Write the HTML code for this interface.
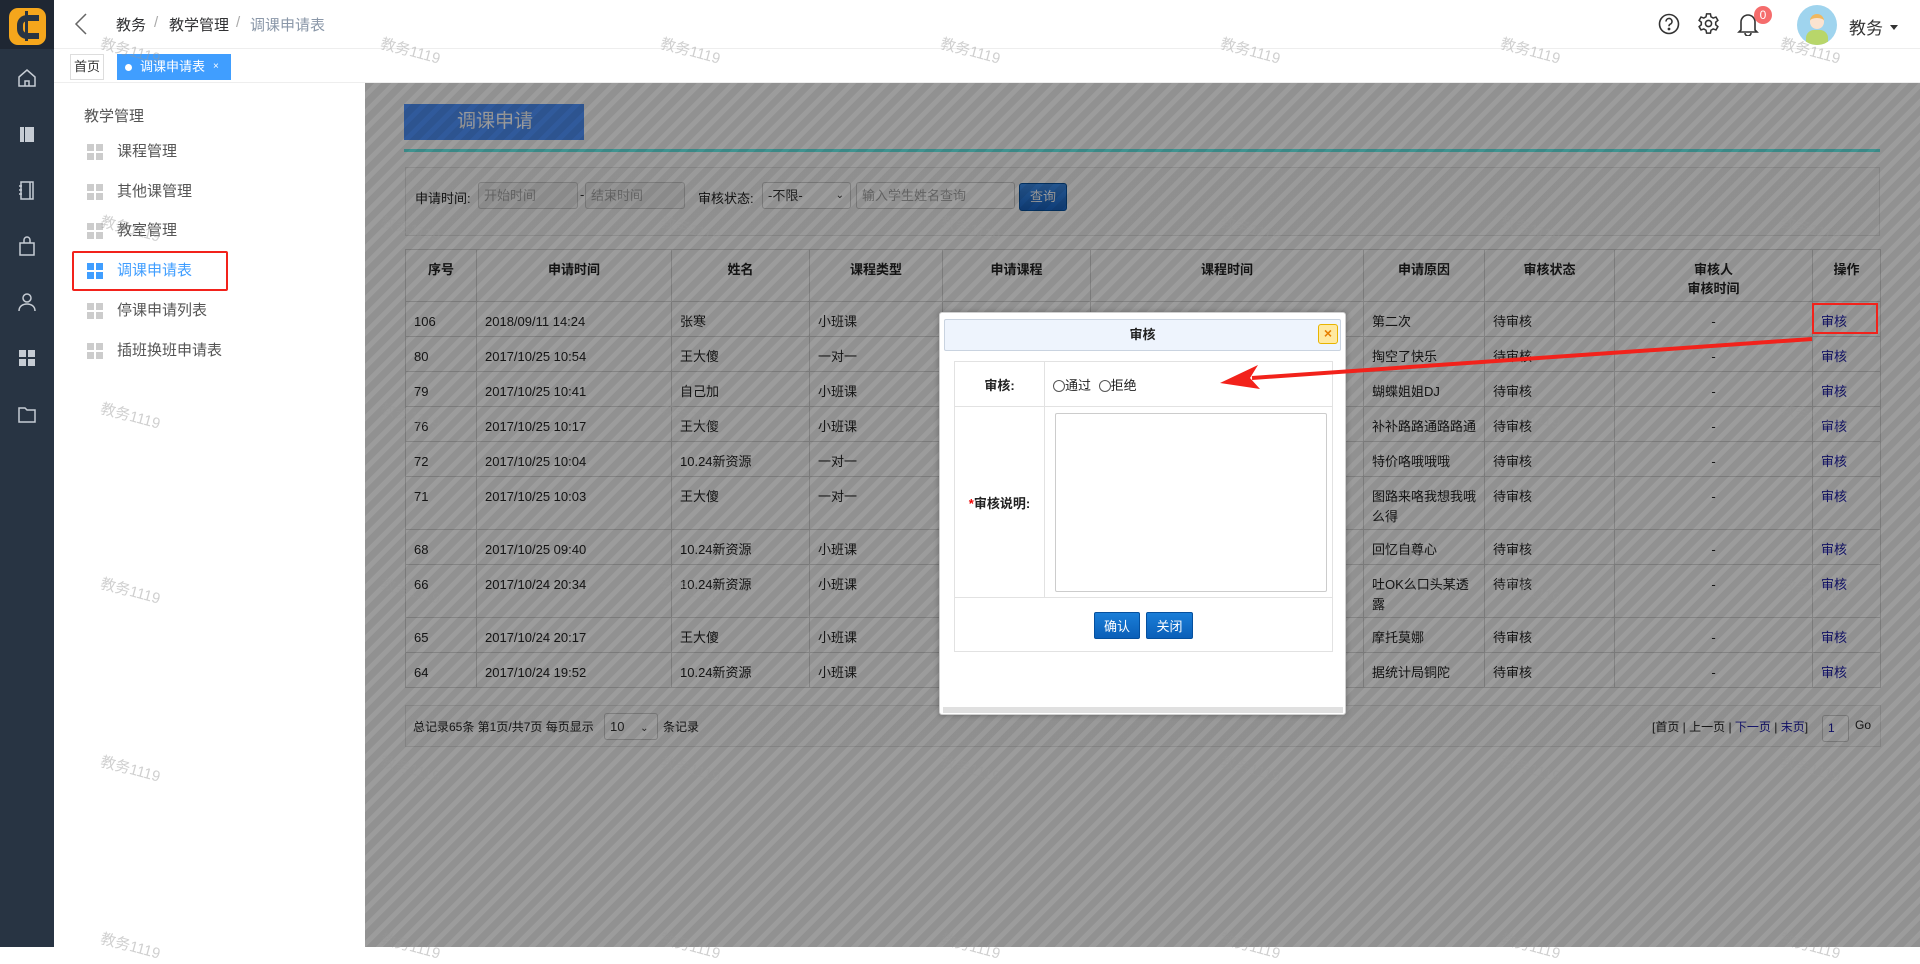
<!DOCTYPE html>
<html><head><meta charset="utf-8">
<style>
*{margin:0;padding:0;box-sizing:border-box}
body{width:1920px;height:947px;overflow:hidden;position:relative;background:#fff;font-family:"Liberation Sans","Noto Sans CJK SC",sans-serif;color:#333}
.abs{position:absolute}
#side{left:0;top:0;width:54px;height:947px;background:#283443}
#logo{left:0;top:0;width:54px;height:49px;background:#1f2733}
.si{position:absolute;left:16px;width:22px;height:22px}
#top{left:54px;top:0;right:0;height:49px;border-bottom:1px solid #eee;background:#fff}
.bc{position:absolute;top:14px;font-size:15px;color:#303133}
#tabs{left:54px;top:49px;right:0;height:34px;border-bottom:1px solid #eee}
#menu{left:54px;top:83px;width:311px;height:864px;background:#fff}
.mi{position:absolute;left:33px;font-size:15px;color:#555;height:20px;line-height:20px}
.mi i{position:absolute;left:0;top:2px;width:16px;height:16px;background:
linear-gradient(#ccc,#ccc) 0 0/7px 7px no-repeat,linear-gradient(#ccc,#ccc) 9px 0/7px 7px no-repeat,linear-gradient(#ccc,#ccc) 0 9px/7px 7px no-repeat,linear-gradient(#ccc,#ccc) 9px 9px/7px 7px no-repeat}
.mi span{position:absolute;left:30px;white-space:nowrap}
#content{left:365px;top:83px;width:1555px;height:864px;background:#fff}
#ov{left:365px;top:83px;width:1555px;height:864px;background:repeating-linear-gradient(-45deg,rgba(0,0,0,0.43) 0 7px,rgba(0,0,0,0.39) 7px 12px)}
table{border-collapse:collapse;font-size:13px;color:#222}
td,th{border:1px solid #d6d6d6}
#tbl th{font-weight:bold;vertical-align:top;padding-top:9px;height:52px}
#tbl td{padding:0 8px;vertical-align:top;padding-top:10px;line-height:20px}
.wm{position:absolute;font-size:15px;color:rgba(150,150,150,0.45);transform:rotate(15deg);white-space:nowrap;font-family:"Liberation Sans","Noto Sans CJK SC",sans-serif}
.inp{position:absolute;height:27px;border:1px solid #ccc;border-radius:3px;background:#f2f2f2;font-size:13px;color:#aaa;line-height:25px;padding-left:5px}
#modal{left:939px;top:312px;width:407px;height:403px;background:#fff;border:1px solid #cfcfcf;border-radius:3px;box-shadow:0 0 6px rgba(0,0,0,.3)}
.btn{position:absolute;height:27px;background:linear-gradient(#1a7ed8,#0a5fb8);color:#fff;font-size:13px;line-height:27px;text-align:center;border-radius:2px;border:1px solid #05509e}
</style></head><body>

<div id="side" class="abs">
 <div id="logo" class="abs"></div>
 <div class="abs" style="left:9px;top:8px;width:37px;height:37px;background:#f5a61c;border-radius:9px"></div>
 <div class="abs" style="left:17px;top:15px;width:22px;height:24px;border:6px solid #283443;border-right:none;border-radius:10px 0 0 10px"></div>
 <div class="abs" style="left:25px;top:11px;width:3px;height:30px;background:#283443"></div>
 <svg class="si" style="top:67px" viewBox="0 0 22 22" fill="none" stroke="#c6ccd4" stroke-width="1.5"><path d="M3 10L11 3l8 7v9H3z"/><path d="M9 19v-5h4v5"/></svg>
 <svg class="si" style="top:123px" viewBox="0 0 22 22" fill="#c6ccd4"><rect x="4" y="4" width="4" height="15"/><rect x="9" y="4" width="9" height="15"/></svg>
 <svg class="si" style="top:179px" viewBox="0 0 22 22" fill="none" stroke="#c6ccd4" stroke-width="1.5"><rect x="5" y="3" width="12" height="17"/><path d="M3 7h3M3 11h3M3 15h3M14 3v17"/></svg>
 <svg class="si" style="top:235px" viewBox="0 0 22 22" fill="none" stroke="#c6ccd4" stroke-width="1.5"><path d="M4 8h14v12H4z"/><path d="M8 8V5a3 3 0 0 1 6 0v3"/></svg>
 <svg class="si" style="top:291px" viewBox="0 0 22 22" fill="none" stroke="#c6ccd4" stroke-width="1.5"><circle cx="11" cy="7" r="4"/><path d="M3 20c0-5 4-7 8-7s8 2 8 7"/></svg>
 <svg class="si" style="top:347px" viewBox="0 0 22 22" fill="#c6ccd4"><rect x="3" y="3" width="7" height="7"/><rect x="12" y="3" width="7" height="7"/><rect x="3" y="12" width="7" height="7"/><rect x="12" y="12" width="7" height="7"/></svg>
 <svg class="si" style="top:403px" viewBox="0 0 22 22" fill="none" stroke="#c6ccd4" stroke-width="1.5"><path d="M3 5h6l2 2h8v12H3z"/></svg>
</div>

<div id="top" class="abs">
 <svg class="abs" style="left:20px;top:12px" width="14" height="24" viewBox="0 0 14 24" fill="none" stroke="#666" stroke-width="1.5"><path d="M12 2L2 12l10 10"/></svg>
 <div class="bc" style="left:62px">教务</div>
 <div class="bc" style="left:100px;color:#aaa">/</div>
 <div class="bc" style="left:115px">教学管理</div>
 <div class="bc" style="left:182px;color:#aaa">/</div>
 <div class="bc" style="left:196px;color:#8a97a8">调课申请表</div>
 <svg class="abs" style="left:1604px;top:13px" width="22" height="22" viewBox="0 0 22 22" fill="none" stroke="#333" stroke-width="1.6"><circle cx="11" cy="11" r="9.5"/><path d="M8 8.5a3 3 0 1 1 4 2.8c-.8.4-1 1-1 2"/><circle cx="11" cy="16" r=".6" fill="#333"/></svg>
 <svg class="abs" style="left:1643px;top:12px" width="23" height="23" viewBox="0 0 24 24" fill="none" stroke="#333" stroke-width="1.6"><circle cx="12" cy="12" r="3.2"/><path d="M10 2h4l.6 3 2.3 1.3 2.9-1 2 3.4-2.3 2v2.6l2.3 2-2 3.4-2.9-1-2.3 1.3-.6 3h-4l-.6-3-2.3-1.3-2.9 1-2-3.4 2.3-2v-2.6l-2.3-2 2-3.4 2.9 1L9.4 5z"/></svg>
 <svg class="abs" style="left:1683px;top:12px" width="22" height="24" viewBox="0 0 22 24" fill="none" stroke="#333" stroke-width="1.6"><path d="M4 18V10a7 7 0 0 1 14 0v8l2 2H2z"/><path d="M8 21a3 3 0 0 0 6 0"/></svg>
 <div class="abs" style="left:1700px;top:6px;width:18px;height:18px;border-radius:9px;background:#f56c6c;color:#fff;font-size:12px;text-align:center;line-height:18px">0</div>
 <div class="abs" style="left:1743px;top:5px;width:40px;height:40px;border-radius:20px;background:#9fd4ee;overflow:hidden">
  <div class="abs" style="left:13px;top:9px;width:14px;height:15px;border-radius:7px;background:#fbe3d0;border-top:4px solid #f0b860"></div>
  <div class="abs" style="left:9px;top:25px;width:22px;height:15px;border-radius:8px 8px 0 0;background:#b8d66a"></div>
 </div>
 <div class="abs" style="left:1795px;top:14px;font-size:17px;color:#333">教务</div>
 <div class="abs" style="left:1836px;top:25px;border:4px solid transparent;border-top:5px solid #333"></div>
</div>

<div id="tabs" class="abs">
 <div class="abs" style="left:16px;top:5px;width:34px;height:26px;border:1px solid #ddd;font-size:13px;line-height:24px;text-align:center;color:#333">首页</div>
 <div class="abs" style="left:63px;top:5px;width:114px;height:26px;background:#409eff;color:#fff;font-size:13px;line-height:26px">
  <span class="abs" style="left:8px;top:10px;width:7px;height:7px;border-radius:4px;background:#fff"></span>
  <span class="abs" style="left:23px;top:0">调课申请表</span>
  <span class="abs" style="left:96px;top:0;font-size:10px">×</span>
 </div>
</div>

<div id="menu" class="abs">
 <div class="abs" style="left:30px;top:22px;font-size:15px;color:#555">教学管理</div>
 <div class="mi" style="top:59px"><i></i><span>课程管理</span></div>
 <div class="mi" style="top:99px"><i></i><span>其他课管理</span></div>
 <div class="mi" style="top:138px"><i></i><span>教室管理</span></div>
 <div class="mi" style="top:178px;color:#409eff"><i style="background:linear-gradient(#409eff,#409eff) 0 0/7px 7px no-repeat,linear-gradient(#409eff,#409eff) 9px 0/7px 7px no-repeat,linear-gradient(#409eff,#409eff) 0 9px/7px 7px no-repeat,linear-gradient(#409eff,#409eff) 9px 9px/7px 7px no-repeat"></i><span>调课申请表</span></div>
 <div class="mi" style="top:218px"><i></i><span>停课申请列表</span></div>
 <div class="mi" style="top:258px"><i></i><span>插班换班申请表</span></div>
 <div class="abs" style="left:18px;top:168px;width:156px;height:40px;border:2px solid #f2221b;border-radius:2px"></div>
</div>

<div id="content" class="abs">
 <div class="abs" style="left:39px;top:21px;width:180px;height:36px;background:#4f93fe;color:#fff;font-size:19px;line-height:36px;padding-left:53px">调课申请</div>
 <div class="abs" style="left:39px;top:66px;width:1476px;height:3px;background:#68f0ec"></div>
 <div class="abs" style="left:40px;top:84px;width:1475px;height:69px;border:1px solid #e4e4e4;background:#fcfcfc"></div>
 <div class="abs" style="left:50px;top:105px;font-size:13px;color:#222">申请时间:</div>
 <div class="inp" style="left:113px;top:99px;width:100px">开始时间</div>
 <div class="abs" style="left:215px;top:104px;font-size:13px">-</div>
 <div class="inp" style="left:220px;top:99px;width:100px">结束时间</div>
 <div class="abs" style="left:333px;top:105px;font-size:13px;color:#222">审核状态:</div>
 <div class="inp" style="left:397px;top:99px;width:89px;background:#fff;color:#333">-不限-<span class="abs" style="right:6px;top:0;font-size:10px">&#8964;</span></div>
 <div class="inp" style="left:491px;top:99px;width:159px;background:#fff">输入学生姓名查询</div>
 <div class="btn" style="left:654px;top:100px;width:48px;height:28px;line-height:26px;border-radius:3px;background:linear-gradient(#3c8ce8,#1864c4)">查询</div>

 <table id="tbl" class="abs" style="left:40px;top:166px;width:1476px;table-layout:fixed">
  <colgroup><col style="width:71px"><col style="width:195px"><col style="width:138px"><col style="width:133px"><col style="width:148px"><col style="width:273px"><col style="width:121px"><col style="width:130px"><col style="width:198px"><col style="width:68px"></colgroup>
  <tr><th>序号</th><th>申请时间</th><th>姓名</th><th>课程类型</th><th>申请课程</th><th>课程时间</th><th>申请原因</th><th>审核状态</th><th>审核人<br>审核时间</th><th>操作</th></tr>
  <tr style="height:35px"><td>106</td><td>2018/09/11 14:24</td><td>张寒</td><td>小班课</td><td></td><td></td><td>第二次</td><td>待审核</td><td style="text-align:center">-</td><td style="color:#1a1aa8">审核</td></tr>
  <tr style="height:35px"><td>80</td><td>2017/10/25 10:54</td><td>王大傻</td><td>一对一</td><td></td><td></td><td>掏空了快乐</td><td>待审核</td><td style="text-align:center">-</td><td style="color:#1a1aa8">审核</td></tr>
  <tr style="height:35px"><td>79</td><td>2017/10/25 10:41</td><td>自己加</td><td>小班课</td><td></td><td></td><td>蝴蝶姐姐DJ</td><td>待审核</td><td style="text-align:center">-</td><td style="color:#1a1aa8">审核</td></tr>
  <tr style="height:35px"><td>76</td><td>2017/10/25 10:17</td><td>王大傻</td><td>小班课</td><td></td><td></td><td>补补路路通路路通</td><td>待审核</td><td style="text-align:center">-</td><td style="color:#1a1aa8">审核</td></tr>
  <tr style="height:35px"><td>72</td><td>2017/10/25 10:04</td><td>10.24新资源</td><td>一对一</td><td></td><td></td><td>特价咯哦哦哦</td><td>待审核</td><td style="text-align:center">-</td><td style="color:#1a1aa8">审核</td></tr>
  <tr style="height:53px"><td>71</td><td>2017/10/25 10:03</td><td>王大傻</td><td>一对一</td><td></td><td></td><td>图路来咯我想我哦么得</td><td>待审核</td><td style="text-align:center">-</td><td style="color:#1a1aa8">审核</td></tr>
  <tr style="height:35px"><td>68</td><td>2017/10/25 09:40</td><td>10.24新资源</td><td>小班课</td><td></td><td></td><td>回忆自尊心</td><td>待审核</td><td style="text-align:center">-</td><td style="color:#1a1aa8">审核</td></tr>
  <tr style="height:53px"><td>66</td><td>2017/10/24 20:34</td><td>10.24新资源</td><td>小班课</td><td></td><td></td><td>吐OK么口头某透露</td><td>待审核</td><td style="text-align:center">-</td><td style="color:#1a1aa8">审核</td></tr>
  <tr style="height:35px"><td>65</td><td>2017/10/24 20:17</td><td>王大傻</td><td>小班课</td><td></td><td></td><td>摩托莫娜</td><td>待审核</td><td style="text-align:center">-</td><td style="color:#1a1aa8">审核</td></tr>
  <tr style="height:35px"><td>64</td><td>2017/10/24 19:52</td><td>10.24新资源</td><td>小班课</td><td></td><td></td><td>据统计局铜陀</td><td>待审核</td><td style="text-align:center">-</td><td style="color:#1a1aa8">审核</td></tr>
 </table>

 <div class="abs" style="left:40px;top:622px;width:1476px;height:42px;border:1px solid #e4e4e4;background:#fcfcfc"></div>
 <div class="abs" style="left:48px;top:635px;font-size:12px;color:#222">总记录65条 第1页/共7页 每页显示</div>
 <div class="inp" style="left:239px;top:630px;width:54px;background:#fff;color:#333">10 <span style="font-size:10px;margin-left:12px">&#8964;</span></div>
 <div class="abs" style="left:298px;top:635px;font-size:12px;color:#222">条记录</div>
 <div class="abs" style="left:1287px;top:635px;font-size:12px;color:#222">[首页 | 上一页 | <span style="color:#1a1aa8">下一页</span> | <span style="color:#1a1aa8">末页</span>]</div>
 <div class="inp" style="left:1457px;top:632px;width:27px;background:#fff;color:#1a1aa8;font-size:12px">1</div>
 <div class="abs" style="left:1490px;top:635px;font-size:12px;color:#222">Go</div>
</div>

<div id="ov" class="abs"></div>

<div class="wm" style="left:100px;top:40px">教务1119</div><div class="wm" style="left:380px;top:40px">教务1119</div><div class="wm" style="left:660px;top:40px">教务1119</div><div class="wm" style="left:940px;top:40px">教务1119</div><div class="wm" style="left:1220px;top:40px">教务1119</div><div class="wm" style="left:1500px;top:40px">教务1119</div><div class="wm" style="left:1780px;top:40px">教务1119</div>
<div class="wm" style="left:100px;top:218px">教务1119</div><div class="wm" style="left:380px;top:218px">教务1119</div><div class="wm" style="left:660px;top:218px">教务1119</div><div class="wm" style="left:940px;top:218px">教务1119</div><div class="wm" style="left:1220px;top:218px">教务1119</div><div class="wm" style="left:1500px;top:218px">教务1119</div><div class="wm" style="left:1780px;top:218px">教务1119</div>
<div class="wm" style="left:100px;top:405px">教务1119</div><div class="wm" style="left:380px;top:405px">教务1119</div><div class="wm" style="left:660px;top:405px">教务1119</div><div class="wm" style="left:940px;top:405px">教务1119</div><div class="wm" style="left:1220px;top:405px">教务1119</div><div class="wm" style="left:1500px;top:405px">教务1119</div><div class="wm" style="left:1780px;top:405px">教务1119</div>
<div class="wm" style="left:100px;top:580px">教务1119</div><div class="wm" style="left:380px;top:580px">教务1119</div><div class="wm" style="left:660px;top:580px">教务1119</div><div class="wm" style="left:940px;top:580px">教务1119</div><div class="wm" style="left:1220px;top:580px">教务1119</div><div class="wm" style="left:1500px;top:580px">教务1119</div><div class="wm" style="left:1780px;top:580px">教务1119</div>
<div class="wm" style="left:100px;top:758px">教务1119</div><div class="wm" style="left:380px;top:758px">教务1119</div><div class="wm" style="left:660px;top:758px">教务1119</div><div class="wm" style="left:940px;top:758px">教务1119</div><div class="wm" style="left:1220px;top:758px">教务1119</div><div class="wm" style="left:1500px;top:758px">教务1119</div><div class="wm" style="left:1780px;top:758px">教务1119</div>
<div class="wm" style="left:100px;top:935px">教务1119</div><div class="wm" style="left:380px;top:935px">教务1119</div><div class="wm" style="left:660px;top:935px">教务1119</div><div class="wm" style="left:940px;top:935px">教务1119</div><div class="wm" style="left:1220px;top:935px">教务1119</div><div class="wm" style="left:1500px;top:935px">教务1119</div><div class="wm" style="left:1780px;top:935px">教务1119</div>

<div class="abs" style="left:1812px;top:303px;width:66px;height:31px;border:2px solid #f2221b"></div>

<div id="modal" class="abs">
 <div class="abs" style="left:4px;top:6px;width:397px;height:32px;background:#eef4fd;border:1px solid #c9d3e0;border-radius:2px;text-align:center;font-size:13px;font-weight:bold;line-height:30px;color:#222">审核</div>
 <div class="abs" style="left:378px;top:11px;width:20px;height:20px;background:#ffe9a0;border:1px solid #e8b400;border-radius:3px;color:#e67e00;font-size:14px;font-weight:bold;text-align:center;line-height:17px">×</div>
 <table class="abs" style="left:14px;top:48px;width:379px;border-color:#e2e2e2">
  <tr style="height:45px"><td style="width:90px;text-align:center;font-weight:bold;border-color:#e2e2e2">审核:</td>
   <td style="border-color:#e2e2e2;padding-left:8px"><span style="display:inline-block;width:12px;height:12px;border:1px solid #555;border-radius:6px;vertical-align:-2px"></span>通过 <span style="display:inline-block;width:12px;height:12px;border:1px solid #555;border-radius:6px;vertical-align:-2px;margin-left:4px"></span>拒绝</td></tr>
  <tr style="height:191px"><td style="text-align:center;font-weight:bold;border-color:#e2e2e2"><span style="color:#e00">*</span>审核说明:</td>
   <td style="border-color:#e2e2e2;padding:5px 5px 5px 10px"><div style="height:179px;border:1px solid #ccc;border-radius:2px"></div></td></tr>
  <tr style="height:54px"><td colspan="2" style="border-color:#e2e2e2"></td></tr>
 </table>
 <div class="btn" style="left:154px;top:299px;width:46px">确认</div>
 <div class="btn" style="left:206px;top:299px;width:47px">关闭</div>
 <div class="abs" style="left:3px;top:394px;width:400px;height:6px;background:#e0e0e0"></div>
</div>

<svg class="abs" style="left:1200px;top:325px" width="620" height="70" viewBox="0 0 620 70">
 <path d="M612 14 L52 53" stroke="#f2221b" stroke-width="4" fill="none"/>
 <path d="M20 58 L58 40 L50 53 L60 64 Z" fill="#f2221b"/>
</svg>
</body></html>
